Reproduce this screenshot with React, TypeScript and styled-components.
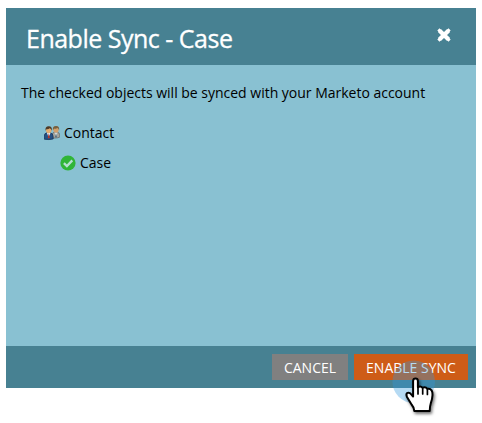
import React from "react";
import styled, { createGlobalStyle } from "styled-components";

const GlobalStyle = createGlobalStyle`
  * { box-sizing: border-box; }
  body {
    margin: 0;
    background: #fff;
    font-family: "Open Sans", "Noto Sans", sans-serif;
    font-size: 14px;
    color: #000;
  }
`;

const Page = styled.main`
  height: 423px;
  padding: 8px 6px 0;
  overflow: hidden;
`;

const Dialog = styled.section`
  display: flex;
  flex-direction: column;
  width: 470px;
  height: 380px;
  background: #89c1d2;
`;

const Header = styled.header`
  display: flex;
  justify-content: space-between;
  height: 57px;
  padding: 0 24px 0 20px;
  background: #478192;
  color: #fff;
`;

const Title = styled.h1`
  margin: 0;
  padding-top: 1px;
  font-size: 25px;
  font-weight: 400;
  letter-spacing: -0.5px;
  line-height: 58px;
  white-space: nowrap;
  -webkit-text-stroke: 0.3px #fff;
`;

const CloseButton = styled.button`
  display: flex;
  align-self: flex-start;
  margin-top: 19px;
  padding: 0;
  border: 0;
  background: none;
`;

const Body = styled.div`
  flex: 1;
  padding: 17px 15px;
`;

const Message = styled.p`
  margin: 0;
  line-height: 22px;
  letter-spacing: -0.01px;
  white-space: nowrap;
`;

const ObjectTree = styled.ul`
  margin: 13px 0 0;
  padding: 0;
  list-style: none;
`;

const ObjectRow = styled.li<{ $indent: number }>`
  display: flex;
  align-items: center;
  gap: 4px;
  height: 30px;
  padding-left: ${(p) => p.$indent}px;

  svg {
    margin-top: 1px;
  }
`;

const Footer = styled.footer`
  display: flex;
  justify-content: flex-end;
  align-items: center;
  gap: 6px;
  height: 42px;
  padding-right: 8px;
  background: #478192;
`;

const Button = styled.button<{ $primary?: boolean }>`
  position: relative;
  width: ${(p) => (p.$primary ? 114 : 76)}px;
  height: 26px;
  padding: 2px 0 0;
  border: 0;
  background: ${(p) => (p.$primary ? "#ce5c17" : "#808080")};
  color: #fff;
  font: inherit;
  line-height: 24px;
  white-space: nowrap;
`;

const Pointer = styled.svg`
  position: absolute;
  left: 36px;
  top: 4px;
  pointer-events: none;
`;

const CloseIcon = () => (
  <svg width="16" height="16" viewBox="0 0 16 16">
    <path
      d="M3.5 3.5 12.5 12.5M12.5 3.5 3.5 12.5"
      stroke="#fff"
      strokeWidth="3.1"
      strokeLinecap="square"
    />
    <path d="M3.4 3.4 12.6 12.6M12.6 3.4 3.4 12.6" stroke="#fff" strokeWidth="4.3" />
  </svg>
);

const ContactIcon = () => (
  <svg width="16" height="16" viewBox="0 0 16 16">
    <path d="M8.3 13V9.5q0-2 2.2-2.3h3q2 .4 2.2 2.6l.2 2.2q-2 1-4.6 1z" fill="#a5a49b" stroke="#686b69" strokeWidth=".8" />
    <path d="m10.5 7.5 1.5 4 1.5-4z" fill="#e0e3df" />
    <path d="m12 8 .7 3.5-.7 1.5-.7-1.5z" fill="#3e6380" />
    <ellipse cx="12" cy="4.4" rx="2.7" ry="3.2" fill="#d2a06b" />
    <path d="M8.9 5.3Q8.3 1.1 12 1q3.7-.1 3.1 4.3-.7-1.8-1.6-2.2-1.8 1-3.4.4z" fill="#76603f" />
    <path d="M.3 14.2V11q0-2.7 2.5-3.2h3.5q2.5.5 2.7 3.2l.2 2.9q-4 1.2-8.9.3z" fill="#245184" stroke="#15345b" strokeWidth=".8" />
    <path d="m2.9 8 1.7 4.3L6.5 8z" fill="#e6edf2" />
    <path d="m4.7 8.2 1 4-.9 1.5-.9-1.5z" fill="#b83428" />
    <ellipse cx="4.7" cy="5" rx="2.7" ry="3.3" fill="#e2ac70" />
    <path d="M1.6 5.8Q.8 1.4 4.7 1.3 8.5 1.2 7.8 5.8 7 3.5 5.7 3.3 4 4.5 2.7 4z" fill="#4d3b29" />
  </svg>
);

const CheckIcon = () => (
  <svg width="16" height="16" viewBox="0 0 16 16">
    <circle cx="8" cy="8" r="7.6" fill="#30b537" />
    <path d="m3.9 8.1 3 3 5.4-5.7" fill="none" stroke="#b5dfd0" strokeWidth="2.3" />
  </svg>
);

const HandPointer = () => (
  <Pointer width="60" height="68" viewBox="390 358 60 68" aria-hidden="true">
    <defs>
      <filter id="handShadow" x="-30%" y="-20%" width="170%" height="160%">
        <feDropShadow dx="1.3" dy="2" stdDeviation="1.4" floodColor="#000" floodOpacity=".55" />
      </filter>
    </defs>
    <circle cx="413.7" cy="381.7" r="21.3" fill="#3399dd" fillOpacity=".36" />
    <g
      filter="url(#handShadow)"
      transform="translate(.5 0)"
      stroke="#000"
      strokeWidth="2"
      strokeLinejoin="round"
      strokeLinecap="round"
    >
      <path
        fill="#fff"
        d="M412.6 396.5V381q.1-2.4 2.4-2.4t2.4 2.4v6.3q2.5-1.8 4.7.4 2.9-1.2 4.8 1.1 2.8-.7 4.2 1.6 1.1 1.7.9 4.6-.2 4-1.6 7.8-1 3.2-1.2 8.2h-15.4q-.3-3.9-2.6-6.3l-4.7-7.7q-1.4-3.2.5-4.1 2.1-.7 3.7 1.4z"
      />
      <path fill="none" d="M417.5 387.5v6.5M422.2 388v6M426.9 389.3v5.2" strokeWidth="1.7" />
    </g>
  </Pointer>
);

export default function App() {
  return (
    <>
      <GlobalStyle />
      <Page>
        <Dialog role="dialog" aria-labelledby="dialog-title">
          <Header>
            <Title id="dialog-title">Enable Sync - Case</Title>
            <CloseButton aria-label="Close"><CloseIcon /></CloseButton>
          </Header>
          <Body>
            <Message>The checked objects will be synced with your Marketo account</Message>
            <ObjectTree>
              <ObjectRow $indent={23}><ContactIcon />Contact</ObjectRow>
              <ObjectRow $indent={39}><CheckIcon />Case</ObjectRow>
            </ObjectTree>
          </Body>
          <Footer>
            <Button>CANCEL</Button>
            <Button $primary>ENABLE SYNC<HandPointer /></Button>
          </Footer>
        </Dialog>
      </Page>
    </>
  );
}
